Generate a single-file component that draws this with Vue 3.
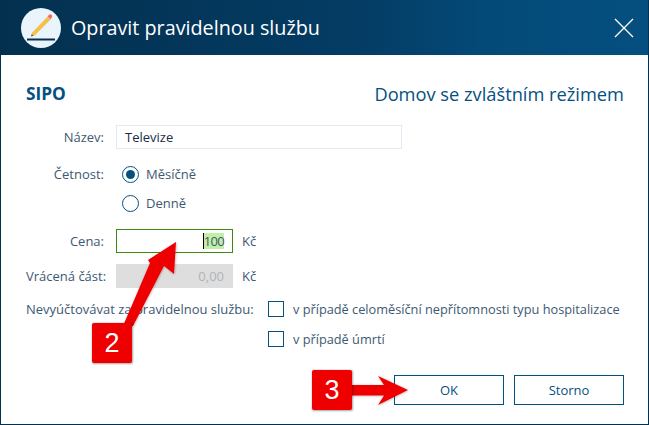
<template>
  <div class="window">
    <header class="titlebar">
      <div class="logo">
        <svg width="40" height="40" viewBox="0 0 40 40">
          <circle cx="20" cy="20" r="20" fill="#eaf4fb" />
          <rect x="6" y="30.5" width="28" height="2" fill="#03304f" />
          <path d="M10 28.5 L11.2 24.4 L26.6 8.4 L29.6 11.4 L14 27.3 Z" fill="#f6c04f" />
          <path d="M26.6 8.4 L28 6.8 Q29.2 5.6 30.6 6.8 Q31.8 8.2 30.8 9.6 L29.6 11.4 Z" fill="#ee6f6f" />
          <path d="M10 28.5 L10.7 25.9 L12.6 27.8 Z" fill="#5b5b5b" />
        </svg>
      </div>
      <h1 class="title">Opravit pravidelnou službu</h1>
      <svg class="close" width="20" height="20" viewBox="0 0 20 20">
        <path d="M1 1 L19 19 M19 1 L1 19" stroke="#fff" stroke-width="1.3" fill="none" />
      </svg>
    </header>

    <main class="body">
      <div class="heading">
        <span class="sipo">SIPO</span>
        <span class="home">Domov se zvláštním režimem</span>
      </div>

      <div class="row row-name">
        <label class="label">Název:</label>
        <div class="input wide">Televize</div>
      </div>

      <div class="row row-radio">
        <label class="label">Četnost:</label>
        <div class="radios">
          <div v-for="r in radios" :key="r.text" class="radio-line">
            <span class="radio" :class="{ on: r.on }"></span>
            <span>{{ r.text }}</span>
          </div>
        </div>
      </div>

      <div class="row row-price">
        <label class="label">Cena:</label>
        <div class="input price focus"><i class="caret"></i><span class="selected">100</span></div>
        <span class="unit">Kč</span>
      </div>

      <div class="row row-refund">
        <label class="label">Vrácená část:</label>
        <div class="input price disabled">0,00</div>
        <span class="unit">Kč</span>
      </div>

      <div class="row row-checks">
        <label class="label-long">Nevyúčtovávat za pravidelnou službu:</label>
        <div class="checks">
          <div v-for="c in checks" :key="c" class="check-line">
            <span class="check"></span>
            <span class="check-text">{{ c }}</span>
          </div>
        </div>
      </div>

      <div class="buttons">
        <button class="btn">OK</button>
        <button class="btn">Storno</button>
      </div>
    </main>

    <!-- screenshot annotations -->
    <svg class="arrows" width="649" height="425" viewBox="0 0 649 425">
      <defs>
        <filter id="soft" x="-20%" y="-20%" width="140%" height="140%">
          <feDropShadow dx="0.5" dy="0.5" stdDeviation="1" flood-color="#000" flood-opacity="0.3" />
        </filter>
      </defs>
      <path d="M176 242 L174 274 L164 266 L133 326 L123 326 L150 263 L148 260 Z" fill="#ee0000" filter="url(#soft)" />
      <path d="M408 390 L378 405 L384 395.5 L350 395.5 L350 385 L384 385 L378 376 Z" fill="#ee0000" filter="url(#soft)" />
    </svg>
    <div class="badge badge-2">2</div>
    <div class="badge badge-3">3</div>
  </div>
</template>

<script setup>
const radios = [
  { text: "Měsíčně", on: true },
  { text: "Denně", on: false }
];

const checks = [
  "v případě celoměsíční nepřítomnosti typu hospitalizace",
  "v případě úmrtí"
];
</script>

<style>
html, body {
  margin: 0;
  background: #fff;
}
</style>

<style scoped>
.window {
  position: relative;
  width: 649px;
  height: 425px;
  box-sizing: border-box;
  display: flex;
  flex-direction: column;
  border: 1px solid #03304f;
  border-top: 0;
  background: #fff;
  overflow: hidden;
  font-family: "Open Sans", sans-serif;
  font-size: 13px;
  color: #3d5873;
  white-space: nowrap;
}

.titlebar {
  height: 55px;
  margin: 0 -1px;
  flex: none;
  display: flex;
  align-items: center;
  padding: 0 15px 0 21px;
  background: linear-gradient(90deg, #03304f 0%, #043c64 55%, #044a78 75%, #044f7f 100%);
}
.logo {
  width: 40px;
  height: 40px;
  line-height: 0;
}
.title {
  margin: 0 0 0 10px;
  flex: 1;
  font-size: 19.75px;
  font-weight: 400;
  color: #fff;
}

.body {
  flex: 1;
  padding: 24px 24px 0 25px;
}

.heading {
  display: flex;
  justify-content: space-between;
  align-items: center;
  height: 28px;
}
.sipo {
  font-size: 17.3px;
  font-weight: 700;
  color: #04507f;
}
.home {
  font-size: 18.25px;
  color: #04507f;
}

.row {
  display: flex;
  align-items: center;
}
.label {
  width: 78px;
  margin-right: 12px;
  text-align: right;
}
.input {
  height: 24px;
  box-sizing: border-box;
  line-height: 22px;
  border: 1px solid #e2e9f3;
  color: #1c2b4a;
}
.wide {
  width: 286px;
  padding-left: 8px;
}
.row-name {
  margin-top: 18px;
}

.row-radio {
  margin-top: 14px;
  align-items: flex-start;
}
.row-radio .label {
  line-height: 22px;
}
.radios {
  display: flex;
  flex-direction: column;
  gap: 7px;
  margin-left: 6px;
}
.radio-line {
  height: 22px;
  display: flex;
  align-items: center;
  gap: 7px;
}
.radio {
  width: 17px;
  height: 17px;
  box-sizing: border-box;
  border: 1px solid #04507f;
  border-radius: 50%;
  display: flex;
  align-items: center;
  justify-content: center;
}
.radio.on::after {
  content: "";
  width: 9px;
  height: 9px;
  border-radius: 50%;
  background: #04507f;
}

.row-price {
  margin-top: 15px;
}
.row-refund {
  margin-top: 11px;
}
.price {
  width: 117px;
  padding-right: 8px;
  display: flex;
  justify-content: flex-end;
  align-items: center;
}
.focus {
  border-color: #3f8a0c;
}
.caret {
  width: 1px;
  height: 16px;
  background: #000;
}
.selected {
  height: 16px;
  line-height: 16px;
  letter-spacing: -0.7px;
  background: #c3eea6;
  color: #3d5873;
}
.disabled {
  background: #dedede;
  border-color: #dedede;
  color: #aeb4b9;
}
.unit {
  margin-left: 9px;
}

.row-checks {
  margin-top: 10px;
  align-items: flex-start;
}
.label-long {
  flex: none;
  width: 242px;
  line-height: 22px;
}
.checks {
  display: flex;
  flex-direction: column;
  gap: 8px;
}
.check-line {
  height: 22px;
  display: flex;
  align-items: center;
  gap: 9px;
}
.check-text {
  font-size: 12.75px;
}
.check {
  width: 16px;
  height: 16px;
  box-sizing: border-box;
  border: 1px solid #04507f;
}

.buttons {
  display: flex;
  justify-content: flex-end;
  gap: 10px;
  margin-top: 25px;
}
.btn {
  width: 110px;
  height: 30px;
  padding: 0;
  border: 1px solid #04507f;
  background: #fff;
  font-family: inherit;
  font-size: 13px;
  color: #04507f;
}

.arrows {
  position: absolute;
  left: -1px;
  top: 0;
  pointer-events: none;
}
.badge {
  position: absolute;
  width: 40px;
  height: 40px;
  border-radius: 2px;
  background: #ee0000;
  box-shadow: 0.5px 0.5px 2px rgba(0, 0, 0, 0.35);
  color: #fff;
  font-family: "Liberation Sans", sans-serif;
  font-size: 27px;
  line-height: 40px;
  text-align: center;
}
.badge-2 {
  left: 91px;
  top: 323px;
}
.badge-3 {
  left: 311px;
  top: 370px;
}
</style>
